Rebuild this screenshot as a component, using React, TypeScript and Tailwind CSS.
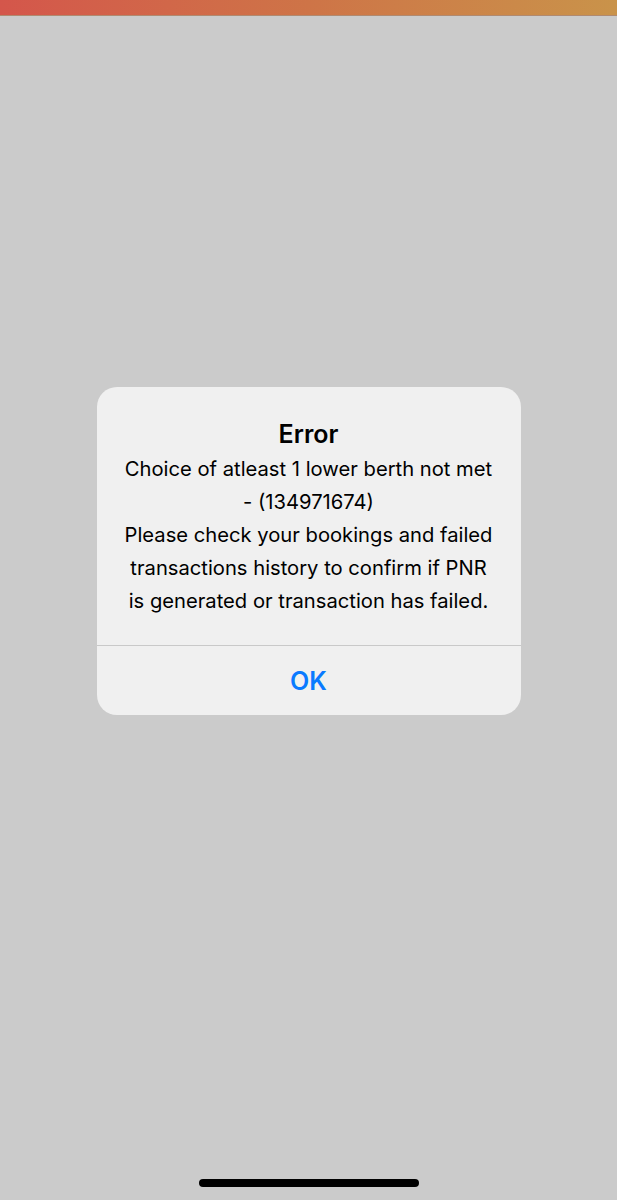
import React from 'react';

// iOS-style alert shown over a dimmed screen
function Alert({ title, lines, action }: { title: string; lines: string[]; action: string }) {
  return (
    <div className="mx-auto w-[424px] overflow-hidden rounded-[20px] bg-[#f0f0f0]">
      <div className="px-4 pt-[31px] pb-[28px] text-center text-black">
        <h2 className="text-[25px] font-semibold leading-[33px]">{title}</h2>
        <div className="mt-[1px] text-[20.2px] leading-[33px]">
          {lines.map((l, i) => (
            <p key={i}>{l}</p>
          ))}
        </div>
      </div>
      <div className="h-px bg-[#c9c9c9]" />
      <button
        type="button"
        className="flex h-[69px] w-full items-center justify-center pt-[3px] text-[25px] font-semibold text-[#0a7aff]"
      >
        {action}
      </button>
    </div>
  );
}

export default function App() {
  return (
    <div
      className="flex h-[1200px] flex-col bg-[#cbcbcb]"
      style={{ fontFamily: 'Inter, "Noto Sans", sans-serif' }}
    >
      {/* status strip */}
      <div className="h-[15px] bg-gradient-to-r from-[#d4564b] via-[#ce7447] to-[#c9934a] shadow-[0_1px_0_#b08a70]" />

      <div className="pt-[372px]">
        <Alert
          title="Error"
          lines={[
            'Choice of atleast 1 lower berth not met',
            '- (134971674)',
            'Please check your bookings and failed',
            'transactions history to confirm if PNR',
            'is generated or transaction has failed.',
          ]}
          action="OK"
        />
      </div>

      {/* home indicator */}
      <div className="mt-auto mb-[13px] flex justify-center">
        <div className="h-[8px] w-[220px] rounded-full bg-black" />
      </div>
    </div>
  );
}
